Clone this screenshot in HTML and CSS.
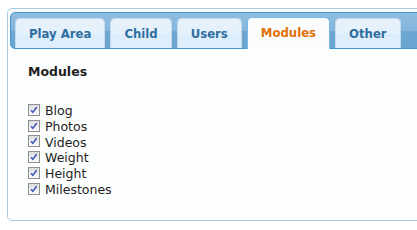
FILE: index.html
```html
<!DOCTYPE html>
<html>
<head>
<meta charset="utf-8">
<link rel="stylesheet" href="styles.css">
</head>
<body>
<div class="tabs">
  <ul class="nav">
    <li class="tab">Play Area</li>
    <li class="tab">Child</li>
    <li class="tab">Users</li>
    <li class="tab active">Modules</li>
    <li class="tab">Other</li>
  </ul>
  <div class="panel">
    <h3 class="title">Modules</h3>
    <ul class="list">
      <li class="row"><span class="cb"><svg viewBox="0 0 12 12" width="12" height="12"><path d="M2.5 6.2 L4.6 8.8 L9.3 2.4" fill="none" stroke="#3a55b8" stroke-width="1.8"/></svg></span>Blog</li>
      <li class="row"><span class="cb"><svg viewBox="0 0 12 12" width="12" height="12"><path d="M2.5 6.2 L4.6 8.8 L9.3 2.4" fill="none" stroke="#3a55b8" stroke-width="1.8"/></svg></span>Photos</li>
      <li class="row"><span class="cb"><svg viewBox="0 0 12 12" width="12" height="12"><path d="M2.5 6.2 L4.6 8.8 L9.3 2.4" fill="none" stroke="#3a55b8" stroke-width="1.8"/></svg></span>Videos</li>
      <li class="row"><span class="cb"><svg viewBox="0 0 12 12" width="12" height="12"><path d="M2.5 6.2 L4.6 8.8 L9.3 2.4" fill="none" stroke="#3a55b8" stroke-width="1.8"/></svg></span>Weight</li>
      <li class="row"><span class="cb"><svg viewBox="0 0 12 12" width="12" height="12"><path d="M2.5 6.2 L4.6 8.8 L9.3 2.4" fill="none" stroke="#3a55b8" stroke-width="1.8"/></svg></span>Height</li>
      <li class="row"><span class="cb"><svg viewBox="0 0 12 12" width="12" height="12"><path d="M2.5 6.2 L4.6 8.8 L9.3 2.4" fill="none" stroke="#3a55b8" stroke-width="1.8"/></svg></span>Milestones</li>
    </ul>
  </div>
</div>
</body>
</html>
```
FILE: styles.css
```css
html, body {
  margin: 0;
  padding: 0;
  background: #ffffff;
  overflow: hidden;
  width: 417px;
  height: 230px;
}
body {
  font-family: "DejaVu Sans", Verdana, sans-serif;
  color: #222222;
}
.tabs {
  margin: 8px 0 0 7px;
  width: 440px;
  height: 213px;
  border: 1px solid #a6c9e2;
  border-radius: 5px;
  background: #fcfdfd;
  padding: 3px 2px;
  box-sizing: border-box;
}
.nav {
  list-style: none;
  margin: 0;
  padding: 4px 4px 0;
  display: flex;
  gap: 5px;
  border: 1px solid #4297d7;
  border-radius: 5px;
  background: linear-gradient(to bottom, #8fbde0 0%, #84b6dd 50%, #6da6d2 52%, #6aa4d1 100%);
  height: 31px;
  align-items: flex-end;
}
.tab {
  height: 30px;
  box-sizing: border-box;
  padding: 0 13px;
  border: 1px solid #c5dbec;
  border-bottom: 0;
  border-radius: 5px 5px 0 0;
  background: linear-gradient(to bottom, #e6f1fb 0%, #e4f0fb 50%, #dcedfc 52%, #deeefc 100%);
  color: #2e6e9e;
  font-weight: bold;
  font-size: 11.7px;
  line-height: 30px;
}
.tab.active {
  background: #fbfcfd;
  border-color: #79b7e7;
  color: #e17009;
  height: 32px;
  margin-bottom: -1px;
  line-height: 31px;
}
.panel {
  padding: 13px 18px;
}
.title {
  margin: 2px 0 23px;
  font-size: 12.5px;
  line-height: 16px;
  font-weight: bold;
  color: #1e1e1e;
}
.list {
  list-style: none;
  margin: 0;
  padding: 0;
}
.row {
  display: flex;
  align-items: center;
  gap: 5px;
  font-size: 12.5px;
  line-height: 15.8px;
  height: 15.8px;
  color: #1e1e1e;
}
.cb {
  width: 12px;
  height: 12px;
  box-sizing: border-box;
  border: 1px solid #8f8f8f;
  background: linear-gradient(to bottom, #dedede, #fbfbfb);
  display: flex;
  align-items: center;
  justify-content: center;
  position: relative;
  top: -1px;
}
.cb svg {
  display: block;
  width: 10px;
  height: 10px;
}
```
